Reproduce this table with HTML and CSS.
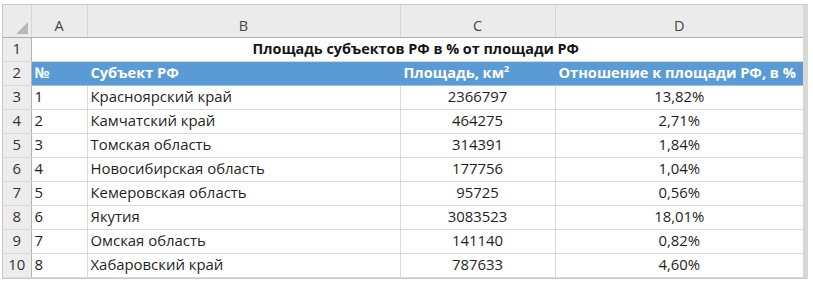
FILE: index.html
```html
<!DOCTYPE html>
<html lang="ru">
<head>
<meta charset="utf-8">
<title>Площадь субъектов РФ</title>
<link rel="stylesheet" href="styles.css">
</head>
<body>
<div class="sheet">
<table class="grid">
<colgroup>
<col class="c-rh"><col class="c-a"><col class="c-b"><col class="c-c"><col class="c-d">
</colgroup>
<thead>
<tr class="colhead">
<th class="corner"><svg class="tri" width="12" height="12" viewBox="0 0 12 12"><polygon points="12,0 12,12 0,12" fill="#b9b9b9"/></svg></th>
<th>A</th><th>B</th><th>C</th><th>D</th>
</tr>
</thead>
<tbody>
<tr><th class="rh">1</th><td class="title" colspan="4">Площадь субъектов РФ в % от площади РФ</td></tr>
<tr class="blue"><th class="rh">2</th><td>№</td><td>Субъект РФ</td><td>Площадь, км<sup>2</sup></td><td>Отношение к площади РФ, в %</td></tr>
<tr><th class="rh">3</th><td>1</td><td>Красноярский край</td><td class="ctr">2366797</td><td class="ctr">13,82%</td></tr>
<tr><th class="rh">4</th><td>2</td><td>Камчатский край</td><td class="ctr">464275</td><td class="ctr">2,71%</td></tr>
<tr><th class="rh">5</th><td>3</td><td>Томская область</td><td class="ctr">314391</td><td class="ctr">1,84%</td></tr>
<tr><th class="rh">6</th><td>4</td><td>Новосибирская область</td><td class="ctr">177756</td><td class="ctr">1,04%</td></tr>
<tr><th class="rh">7</th><td>5</td><td>Кемеровская область</td><td class="ctr">95725</td><td class="ctr">0,56%</td></tr>
<tr><th class="rh">8</th><td>6</td><td>Якутия</td><td class="ctr">3083523</td><td class="ctr">18,01%</td></tr>
<tr><th class="rh">9</th><td>7</td><td>Омская область</td><td class="ctr">141140</td><td class="ctr">0,82%</td></tr>
<tr><th class="rh">10</th><td>8</td><td>Хабаровский край</td><td class="ctr">787633</td><td class="ctr">4,60%</td></tr>
</tbody>
</table>
</div>
</body>
</html>
```
FILE: styles.css
```css
html, body {
  margin: 0;
  padding: 0;
  background: #ffffff;
}
body {
  font-family: "Open Sans", "Noto Sans", "DejaVu Sans", sans-serif;
  color: #1f1f1f;
}
.sheet {
  margin: 4px 0 0 2px;
  width: 806px;
  box-sizing: border-box;
  border: 1px solid #c9c9c2;
  border-right-width: 5px;
  border-right-color: #d9d9d3;
  background: #fff;
}
.grid {
  border-collapse: collapse;
  table-layout: fixed;
  width: 800px;
}
.c-rh { width: 28px; }
.c-a { width: 56px; }
.c-b { width: 313px; }
.c-c { width: 155px; }
.c-d { width: 248px; }

.colhead th {
  height: 32px;
  box-sizing: border-box;
  padding: 10px 0 0;
  background: #ebebeb;
  font-weight: normal;
  font-size: 14.5px;
  line-height: 20px;
  color: #444444;
  text-align: center;
  border-left: 1px solid #d6d6d6;
  border-bottom: 1px solid #aeaeae;
}
.colhead th.corner {
  border-left: none;
  text-align: right;
  vertical-align: bottom;
  padding: 0 3px 3px 0;
}
.tri { display: block; margin-left: auto; }

td, th.rh {
  height: 23px;
  padding: 0 3px 2px;
  box-sizing: border-box;
  font-size: 14.9px;
  line-height: 21px;
  white-space: nowrap;
  overflow: hidden;
  border-bottom: 1px solid #d9d9d9;
  border-left: 1px solid #d9d9d9;
}
th.rh {
  background: #ededed;
  font-weight: normal;
  color: #333333;
  text-align: center;
  padding: 0 0 2px;
  border-left: none;
  border-right: 1px solid #b4b4b4;
}
td.title {
  text-align: center;
  font-size: 14.4px;
  font-weight: bold;
  color: #141414;
  padding-left: 0;
  border-left: none;
}
.blue td {
  background: #5b9bd5;
  color: #ffffff;
  font-size: 14.6px;
  font-weight: bold;
  border-left-color: #5b9bd5;
  border-bottom-color: #9cc3e6;
}
.blue sup {
  font-size: 9px;
  line-height: 0;
  vertical-align: 6px;
}
td.ctr { text-align: center; }
```
